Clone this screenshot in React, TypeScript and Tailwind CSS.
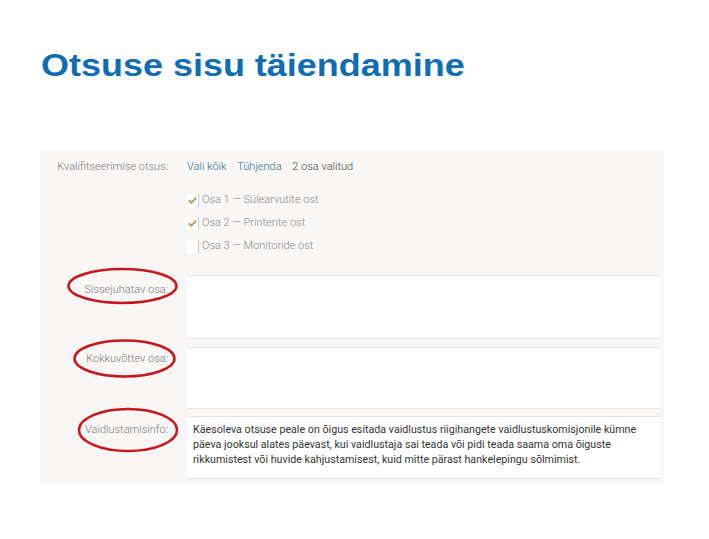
import React from 'react';

// Slide: decision content editor screenshot with highlighted labels
const parts = [
  { id: 1, name: 'Sülearvutite ost', checked: true },
  { id: 2, name: 'Printerite ost', checked: true },
  { id: 3, name: 'Monitoride ost', checked: false },
];

const Check: React.FC<{ checked: boolean }> = ({ checked }) => (
  <span className="w-[12px] h-[13px] bg-white border-r border-[#c9c9c9] flex items-center justify-center">
    {checked && (
      <svg className="w-[9px] h-[9px]" viewBox="0 0 10 10" fill="none">
        <path d="M1.5 5.2l2.3 2.3 4.7-5" stroke="#c98a45" strokeWidth="2" strokeLinecap="round" strokeLinejoin="round" />
      </svg>
    )}
  </span>
);

const FieldRow: React.FC<{ label: string; top: string; labelTop: string; height: string; children?: React.ReactNode }> = ({ label, top, labelTop, height, children }) => (
  <div className={`flex ${top}`}>
    <div className={`w-[147px] shrink-0 pr-[19px] text-right text-[#7a7a7a] ${labelTop}`}>{label}</div>
    <div className={`flex-1 mr-[4px] bg-white border-y border-[#e4e4e4] ${height}`}>{children}</div>
  </div>
);

const App: React.FC = () => {
  return (
    <div className="w-[709px] h-[539px] bg-white relative" style={{ fontFamily: 'Roboto, "Noto Sans", sans-serif' }}>
      <h1 className="absolute left-[41px] top-[46px] text-[31px] leading-[40px] font-bold text-[#0f6db5] origin-left scale-x-[1.16]" style={{ fontFamily: '"Liberation Sans", Arial, sans-serif' }}>
        Otsuse sisu täiendamine
      </h1>

      <div className="absolute left-[40px] top-[150px] w-[624px] h-[334px] bg-[#f8f7f6] text-[11px] font-light">
        <div className="flex pt-[9px] leading-[16px]">
          <div className="w-[147px] pr-[19px] text-right text-[#7a7a7a]">Kvalifitseerimise otsus:</div>
          <div className="text-[#444]">
            <span className="text-[#2b6c98]">Vali kõik</span>
            <span className="text-[#999] mx-[4px]">·</span>
            <span className="text-[#2b6c98]">Tühjenda</span>
            <span className="text-[#999] mx-[4px]">·</span>
            <span>2 osa valitud</span>
          </div>
        </div>

        <div className="pl-[147px] pt-[19px] flex flex-col gap-[10px] text-[#888]">
          {parts.map((p) => (
            <div key={p.id} className="flex items-center gap-[3px] h-[13px]">
              <Check checked={p.checked} />
              <span>Osa {p.id} — {p.name}</span>
            </div>
          ))}
        </div>

        <FieldRow label="Sissejuhatav osa:" top="mt-[22px]" labelTop="pt-[7px]" height="h-[64px]" />
        <FieldRow label="Kokkuvõttev osa:" top="mt-[8px]" labelTop="pt-[4px]" height="h-[62px]" />
        <FieldRow label="Vaidlustamisinfo:" top="mt-[7px]" labelTop="pt-[6px]" height="h-[63px]">
          <div className="pl-[6px] pt-[5px] text-[10.7px] leading-[15px] text-[#333] font-normal">
            Käesoleva otsuse peale on õigus esitada vaidlustus riigihangete vaidlustuskomisjonile kümne
            <br />
            päeva jooksul alates päevast, kui vaidlustaja sai teada või pidi teada saama oma õiguste
            <br />
            rikkumistest või huvide kahjustamisest, kuid mitte pärast hankelepingu sõlmimist.
          </div>
        </FieldRow>

        <svg className="absolute left-0 top-0 w-[624px] h-[334px] pointer-events-none" viewBox="0 0 624 334" fill="none">
          <ellipse cx="82.5" cy="136" rx="54" ry="17" stroke="#c8161d" strokeWidth="2.5" />
          <ellipse cx="84.5" cy="208.5" rx="50" ry="18" stroke="#c8161d" strokeWidth="2.5" />
          <ellipse cx="88" cy="280" rx="49" ry="21" stroke="#c8161d" strokeWidth="2.5" />
        </svg>
      </div>
    </div>
  );
};

export default App;
